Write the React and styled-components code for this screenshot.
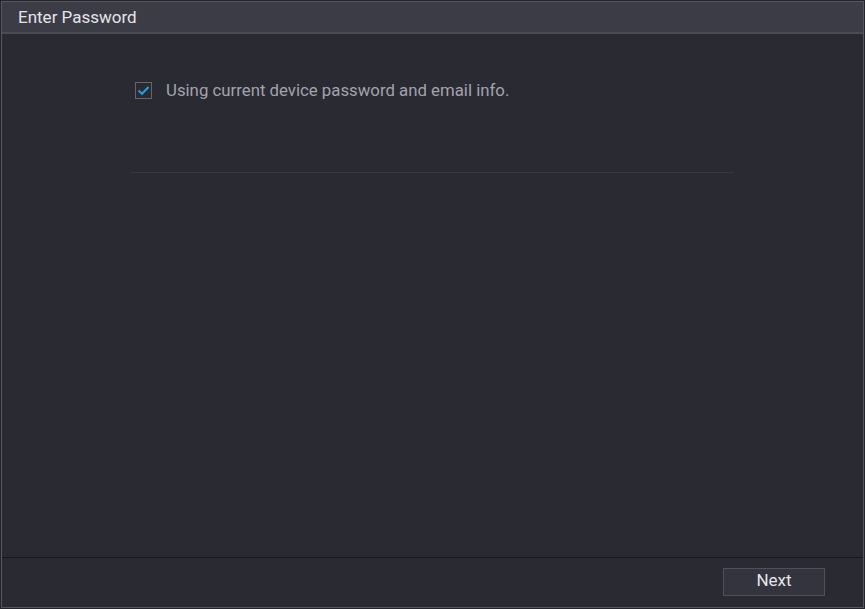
import React from "react";
import styled, { createGlobalStyle } from "styled-components";

const GlobalStyle = createGlobalStyle`
  html, body {
    margin: 0;
    padding: 0;
    background: #24242c;
    font-family: Roboto, "Liberation Sans", Arial, sans-serif;
  }
`;

const Screen = styled.div`
  width: 865px;
  height: 609px;
  padding: 1px 0 0 1px;
  box-sizing: border-box;
  background: #24242c;
  overflow: hidden;
`;

const Dialog = styled.div`
  width: 863px;
  height: 607px;
  box-sizing: border-box;
  border: 1px solid #56565f;
  background: #2a2a33;
  display: flex;
  flex-direction: column;
`;

const Header = styled.div`
  height: 32px;
  flex-shrink: 0;
  display: flex;
  align-items: center;
  padding: 0 0 1px 16px;
  box-sizing: border-box;
  background: #3c3c46;
  border-bottom: 2px solid #4b4b55;
  color: #e4e4e8;
  font-size: 17px;
`;

const Body = styled.div`
  flex: 1;
  padding: 47px 0 0 129px;
  display: flex;
  flex-direction: column;
  border-bottom: 1px solid #17171d;
`;

const CheckRow = styled.label`
  display: flex;
  align-items: center;
  gap: 14px;
  height: 18px;
  padding-left: 4px;
  color: #a3a3ab;
  font-size: 16.8px;
`;

const Box = styled.span`
  width: 17px;
  height: 17px;
  box-sizing: border-box;
  border: 1px solid #65656f;
  display: flex;
  align-items: center;
  justify-content: center;
`;

const Divider = styled.div`
  width: 603px;
  height: 1px;
  margin-top: 73px;
  background: #393942;
`;

const Footer = styled.div`
  height: 49px;
  flex-shrink: 0;
  display: flex;
  align-items: center;
  justify-content: flex-end;
  padding-right: 38px;
`;

const Button = styled.button`
  width: 102px;
  height: 28px;
  box-sizing: border-box;
  border: 1px solid #50505a;
  background: #34343e;
  color: #e6e6ea;
  font-family: Roboto, "Liberation Sans", Arial, sans-serif;
  font-size: 17px;
  padding: 0 0 3px;
  margin-bottom: 2px;
`;

export default function App() {
  return (
    <Screen>
      <GlobalStyle />
      <Dialog>
        <Header>Enter Password</Header>
        <Body>
          <CheckRow>
            <Box>
              <svg width="13" height="11" viewBox="0 0 13 11">
                <path d="M1.5 5.6 L5 8.8 L11.5 2" fill="none" stroke="#2b9be0" strokeWidth="2" />
              </svg>
            </Box>
            Using current device password and email info.
          </CheckRow>
          <Divider />
        </Body>
        <Footer>
          <Button>Next</Button>
        </Footer>
      </Dialog>
    </Screen>
  );
}
